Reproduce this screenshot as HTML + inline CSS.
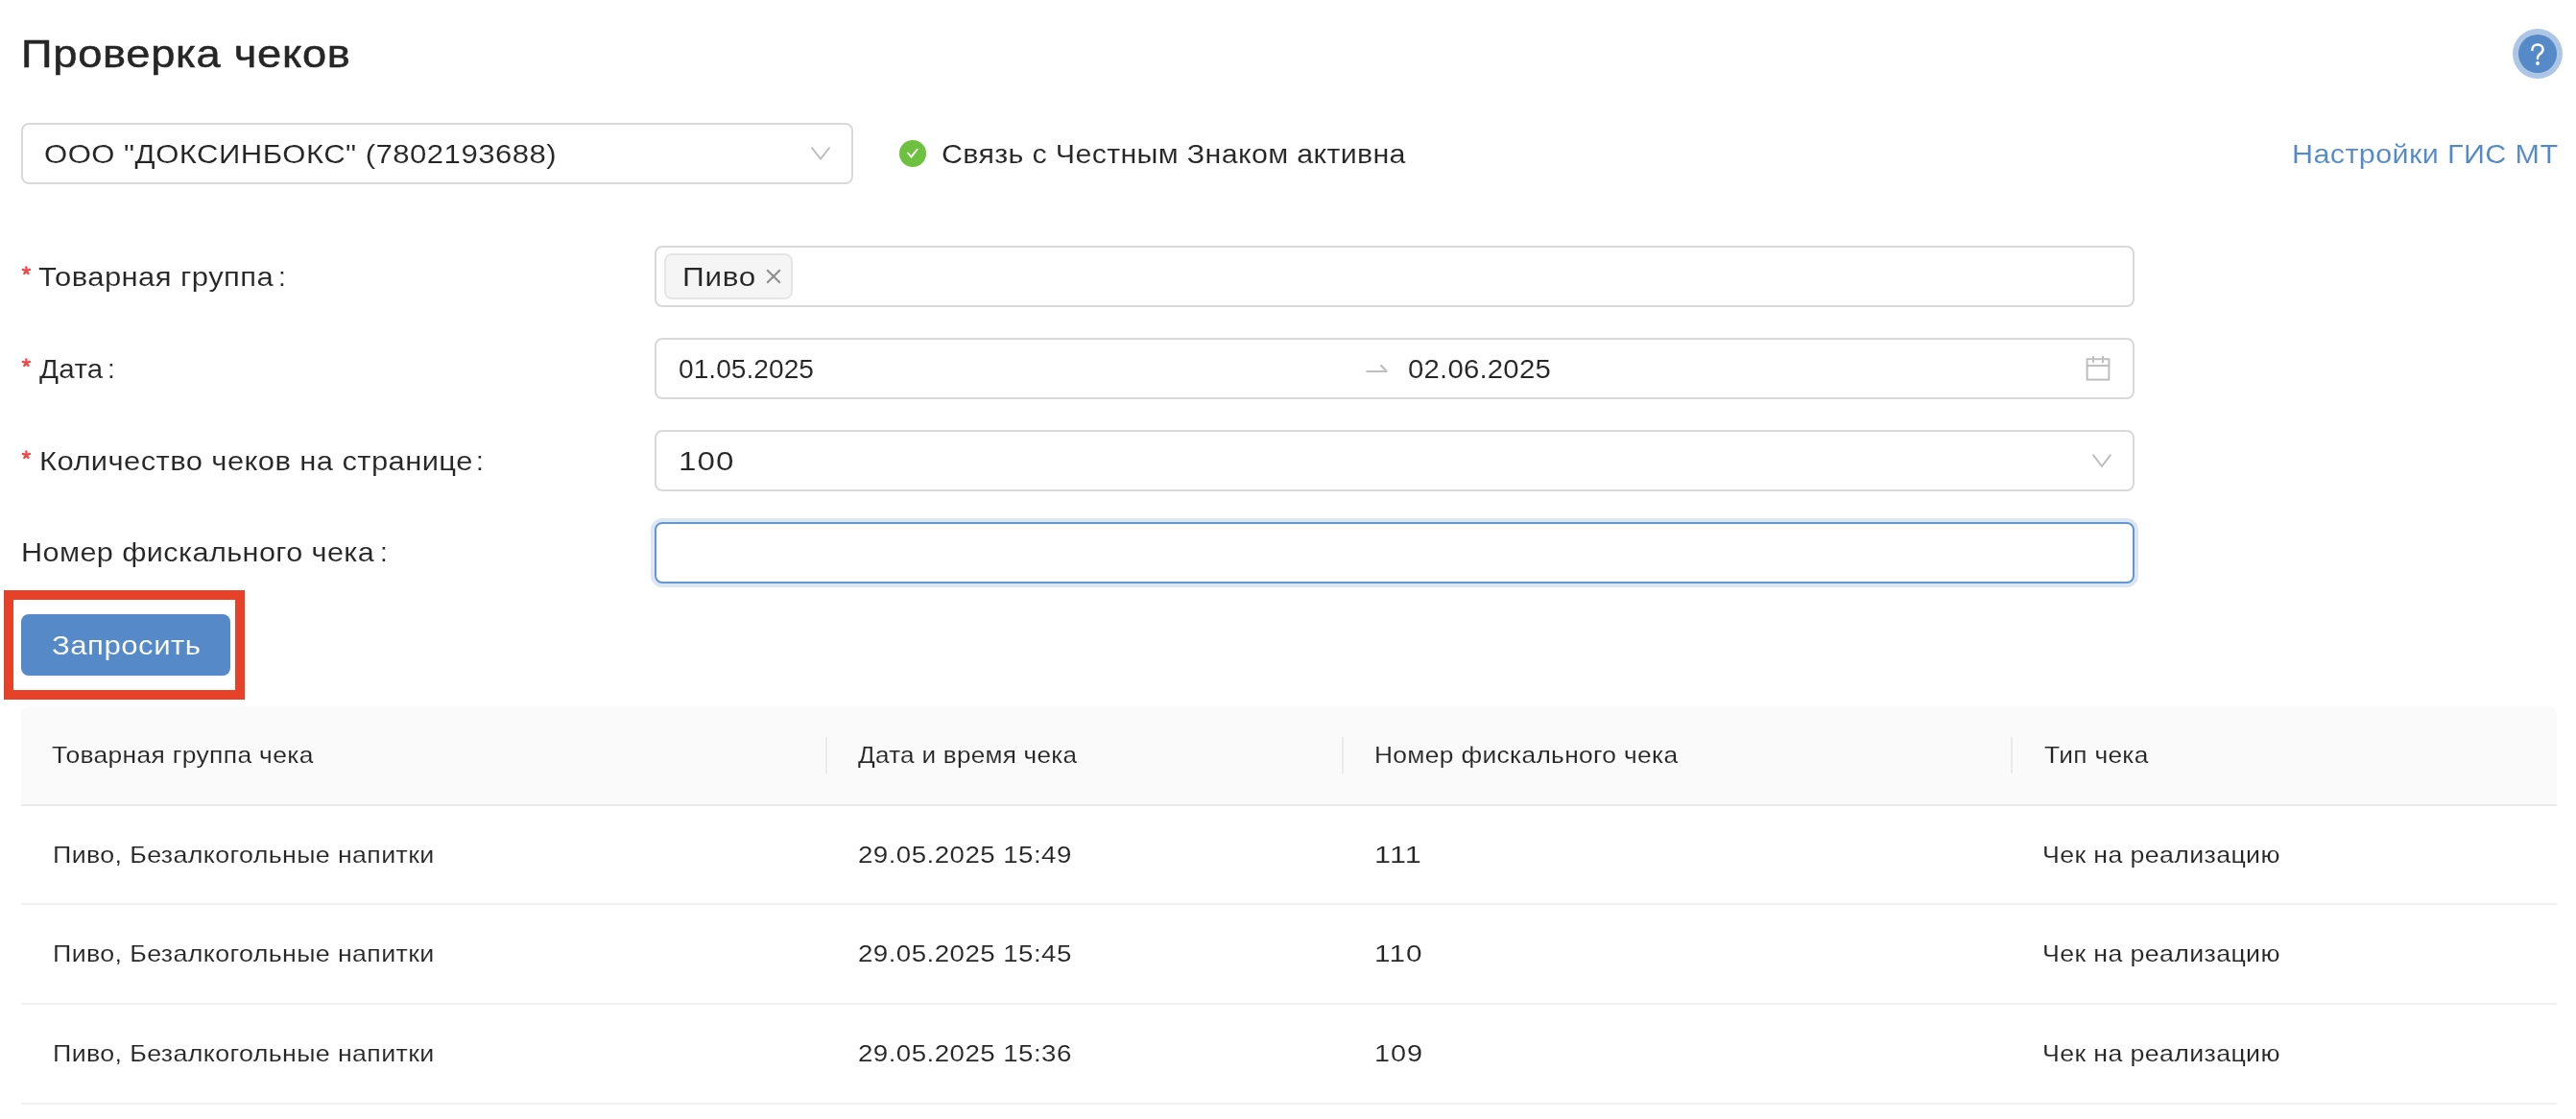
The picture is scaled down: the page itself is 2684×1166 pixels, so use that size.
<!DOCTYPE html>
<html lang="ru">
<head>
<meta charset="utf-8">
<title>Проверка чеков</title>
<style>
html,body{margin:0;padding:0;background:#fff;}
body{width:2684px;height:1166px;position:relative;overflow:hidden;font-family:"Liberation Sans",sans-serif;}
.t{position:absolute;white-space:pre;line-height:1;transform-origin:0 0;will-change:transform;font-family:"Liberation Sans",sans-serif;}
.box{position:absolute;box-sizing:border-box;border:2px solid #d9d9d9;border-radius:8px;background:#fff;}
.ic{position:absolute;overflow:visible;}
.star{position:absolute;}
.hline{position:absolute;left:22px;width:2642px;height:2px;background:#f0f0f0;}
.vdiv{position:absolute;top:768px;width:2px;height:38px;background:#ebebeb;}
</style>
</head>
<body>
<!-- help icon -->
<svg class="ic" style="left:2610px;top:22px" width="68" height="68" viewBox="0 0 68 68">
  <circle cx="34" cy="34" r="26" fill="#adc6e5"/>
  <circle cx="34" cy="34" r="20" fill="#5589c8"/>
  <path d="M28.4 30 C28.4 26.6 31 24.4 34 24.4 C37.2 24.4 39.6 26.6 39.6 29.4 C39.6 32 37.8 33.2 36.2 34.4 C34.8 35.6 34 36.6 34 38.2 L34 39" fill="none" stroke="#fff" stroke-width="2.5" stroke-linecap="round"/>
  <circle cx="34" cy="44" r="1.9" fill="#fff"/>
</svg>

<!-- org select -->
<div class="box" style="left:22px;top:128px;width:867px;height:64px;"></div>
<svg class="ic" style="left:835px;top:140px" width="40" height="40" viewBox="0 0 40 40">
  <polyline points="10.6,13.6 20,25.6 29.4,13.6" fill="none" stroke="#bfbfbf" stroke-width="2"/>
</svg>

<!-- status -->
<svg class="ic" style="left:937px;top:146px" width="28" height="28" viewBox="0 0 28 28">
  <circle cx="14" cy="14" r="14" fill="#6ec040"/>
  <path d="M7.9 13.5 L9.4 12.4 L12.5 15.9 L17.6 9.6 Q18.4 8.9 19.4 8.9 L20.2 8.9 L12.6 18.9 Z" fill="#fff"/>
</svg>

<!-- form: asterisks -->
<svg class="star" style="left:22px;top:277px" width="11" height="11" viewBox="0 0 11 11"><g stroke="#ea4c4c" stroke-width="2.3" stroke-linecap="round"><line x1="5.4" y1="5.2" x2="5.4" y2="1.3"/><line x1="5.4" y1="5.2" x2="1.8" y2="3.9"/><line x1="5.4" y1="5.2" x2="9.0" y2="3.9"/><line x1="5.4" y1="5.2" x2="3.3" y2="8.0"/><line x1="5.4" y1="5.2" x2="7.5" y2="8.0"/></g></svg>
<svg class="star" style="left:22px;top:373px" width="11" height="11" viewBox="0 0 11 11"><g stroke="#ea4c4c" stroke-width="2.3" stroke-linecap="round"><line x1="5.4" y1="5.2" x2="5.4" y2="1.3"/><line x1="5.4" y1="5.2" x2="1.8" y2="3.9"/><line x1="5.4" y1="5.2" x2="9.0" y2="3.9"/><line x1="5.4" y1="5.2" x2="3.3" y2="8.0"/><line x1="5.4" y1="5.2" x2="7.5" y2="8.0"/></g></svg>
<svg class="star" style="left:22px;top:469px" width="11" height="11" viewBox="0 0 11 11"><g stroke="#ea4c4c" stroke-width="2.3" stroke-linecap="round"><line x1="5.4" y1="5.2" x2="5.4" y2="1.3"/><line x1="5.4" y1="5.2" x2="1.8" y2="3.9"/><line x1="5.4" y1="5.2" x2="9.0" y2="3.9"/><line x1="5.4" y1="5.2" x2="3.3" y2="8.0"/><line x1="5.4" y1="5.2" x2="7.5" y2="8.0"/></g></svg>

<!-- inputs -->
<div class="box" style="left:682px;top:256px;width:1542px;height:64px;"></div>
<div class="box" style="left:692px;top:264px;width:134px;height:48px;background:#f5f5f5;border-color:#e6e6e6;"></div>
<svg class="ic" style="left:796px;top:278px" width="20" height="20" viewBox="0 0 20 20">
  <g stroke="#8c8c8c" stroke-width="2"><line x1="3.2" y1="3.2" x2="16.8" y2="16.8"/><line x1="16.8" y1="3.2" x2="3.2" y2="16.8"/></g>
</svg>

<div class="box" style="left:682px;top:352px;width:1542px;height:64px;"></div>
<svg class="ic" style="left:1420px;top:374px" width="30" height="16" viewBox="0 0 30 16">
  <polyline points="3.5,13 25,13 18.4,6.4" fill="none" stroke="#bfbfbf" stroke-width="2.2" stroke-linejoin="bevel"/>
</svg>
<svg class="ic" style="left:2170px;top:368px" width="32" height="32" viewBox="0 0 32 32">
  <g fill="none" stroke="#bfbfbf" stroke-width="2"><rect x="4.6" y="6.2" width="22.8" height="21.4"/><line x1="4.6" y1="13" x2="27.4" y2="13"/><line x1="11" y1="3" x2="11" y2="10"/><line x1="21" y1="3" x2="21" y2="10"/></g>
</svg>

<div class="box" style="left:682px;top:448px;width:1542px;height:64px;"></div>
<svg class="ic" style="left:2170px;top:460px" width="40" height="40" viewBox="0 0 40 40">
  <polyline points="10.6,13.6 20,25.8 29.4,13.6" fill="none" stroke="#bfbfbf" stroke-width="2"/>
</svg>

<div class="box" style="left:682px;top:544px;width:1542px;height:64px;border-color:#6396d2;box-shadow:0 0 0 4px #dde7f3;"></div>

<!-- red highlight + button -->
<div style="position:absolute;left:4px;top:615px;width:251px;height:114px;box-sizing:border-box;border:10px solid #e8412a;"></div>
<div style="position:absolute;left:22px;top:640px;width:218px;height:64px;background:#5589c8;border-radius:8px;box-shadow:0 2px 0 rgba(0,0,0,0.03);"></div>

<!-- table -->
<div style="position:absolute;left:22px;top:736px;width:2642px;height:102px;background:#fafafa;border-radius:8px 8px 0 0;"></div>
<div class="hline" style="top:838px;background:#e9e9e9"></div>
<div class="vdiv" style="left:860px"></div>
<div class="vdiv" style="left:1398px"></div>
<div class="vdiv" style="left:2095px"></div>
<div class="hline" style="top:941px"></div>
<div class="hline" style="top:1045px"></div>
<div class="hline" style="top:1149px"></div>

<div class="t" style="left:22.21px;top:36.00px;font-size:40px;color:#262626;transform:scaleX(1.1308);letter-spacing:0.645px;-webkit-text-stroke:0.5px #262626;">Проверка чеков</div>
<div class="t" style="left:46.09px;top:146.50px;font-size:28px;color:#262626;transform:scaleX(1.1112);letter-spacing:0.417px;-webkit-text-stroke:0.1px #fff;">ООО &quot;ДОКСИНБОКС&quot; (7802193688)</div>
<div class="t" style="left:981.31px;top:146.50px;font-size:28px;color:#262626;transform:scaleX(1.0868);letter-spacing:0.300px;-webkit-text-stroke:0.1px #fff;">Связь с Честным Знаком активна</div>
<div class="t" style="left:2387.62px;top:146.50px;font-size:28px;color:#5289c8;transform:scaleX(1.0911);letter-spacing:0.342px;-webkit-text-stroke:0.1px #fff;">Настройки ГИС МТ</div>
<div class="t" style="left:40.29px;top:274.50px;font-size:28px;color:#262626;transform:scaleX(1.1087);letter-spacing:0.376px;-webkit-text-stroke:0.1px #fff;">Товарная группа</div>
<div class="t" style="left:289.70px;top:274.50px;font-size:28px;color:#262626;-webkit-text-stroke:0.1px #fff;">:</div>
<div class="t" style="left:710.84px;top:274.50px;font-size:28px;color:#262626;transform:scaleX(1.1283);letter-spacing:0.597px;-webkit-text-stroke:0.1px #f5f5f5;">Пиво</div>
<div class="t" style="left:40.90px;top:370.50px;font-size:28px;color:#262626;transform:scaleX(1.0555);letter-spacing:0.272px;-webkit-text-stroke:0.1px #fff;">Дата</div>
<div class="t" style="left:112.20px;top:370.50px;font-size:28px;color:#262626;-webkit-text-stroke:0.1px #fff;">:</div>
<div class="t" style="left:706.50px;top:370.50px;font-size:28px;color:#262626;transform:scaleX(1.0046);letter-spacing:0.018px;-webkit-text-stroke:0.1px #fff;">01.05.2025</div>
<div class="t" style="left:1466.95px;top:370.50px;font-size:28px;color:#262626;transform:scaleX(1.0493);letter-spacing:0.180px;-webkit-text-stroke:0.1px #fff;">02.06.2025</div>
<div class="t" style="left:41.39px;top:466.50px;font-size:28px;color:#262626;transform:scaleX(1.1069);letter-spacing:0.353px;-webkit-text-stroke:0.1px #fff;">Количество чеков на странице</div>
<div class="t" style="left:495.70px;top:466.50px;font-size:28px;color:#262626;-webkit-text-stroke:0.1px #fff;">:</div>
<div class="t" style="left:706.93px;top:466.50px;font-size:28px;color:#262626;transform:scaleX(1.1855);letter-spacing:0.860px;-webkit-text-stroke:0.1px #fff;">100</div>
<div class="t" style="left:21.81px;top:562.10px;font-size:28px;color:#262626;transform:scaleX(1.0957);letter-spacing:0.340px;-webkit-text-stroke:0.1px #fff;">Номер фискального чека</div>
<div class="t" style="left:395.60px;top:562.10px;font-size:28px;color:#262626;-webkit-text-stroke:0.1px #fff;">:</div>
<div class="t" style="left:53.99px;top:659.10px;font-size:28px;color:#ffffff;transform:scaleX(1.1134);letter-spacing:0.427px;-webkit-text-stroke:0.1px #5589c8;">Запросить</div>
<div class="t" style="left:53.60px;top:774.70px;font-size:24px;color:#262626;transform:scaleX(1.1018);letter-spacing:0.294px;-webkit-text-stroke:0.1px #fafafa;">Товарная группа чека</div>
<div class="t" style="left:894.30px;top:774.70px;font-size:24px;color:#262626;transform:scaleX(1.0866);letter-spacing:0.257px;-webkit-text-stroke:0.1px #fafafa;">Дата и время чека</div>
<div class="t" style="left:1432.30px;top:774.70px;font-size:24px;color:#262626;transform:scaleX(1.0980);letter-spacing:0.298px;-webkit-text-stroke:0.1px #fafafa;">Номер фискального чека</div>
<div class="t" style="left:2129.50px;top:774.70px;font-size:24px;color:#262626;transform:scaleX(1.0948);letter-spacing:0.300px;-webkit-text-stroke:0.1px #fafafa;">Тип чека</div>
<div class="t" style="left:54.67px;top:878.50px;font-size:24px;color:#262626;transform:scaleX(1.1166);letter-spacing:0.332px;-webkit-text-stroke:0.1px #fff;">Пиво, Безалкогольные напитки</div>
<div class="t" style="left:894.25px;top:878.50px;font-size:24px;color:#262626;transform:scaleX(1.1522);letter-spacing:0.407px;-webkit-text-stroke:0.1px #fff;">29.05.2025 15:49</div>
<div class="t" style="left:1431.65px;top:878.50px;font-size:24px;color:#262626;transform:scaleX(1.2753);letter-spacing:0.917px;-webkit-text-stroke:0.1px #fff;">111</div>
<div class="t" style="left:2127.57px;top:878.50px;font-size:24px;color:#262626;transform:scaleX(1.1136);letter-spacing:0.341px;-webkit-text-stroke:0.1px #fff;">Чек на реализацию</div>
<div class="t" style="left:54.67px;top:982.00px;font-size:24px;color:#262626;transform:scaleX(1.1166);letter-spacing:0.332px;-webkit-text-stroke:0.1px #fff;">Пиво, Безалкогольные напитки</div>
<div class="t" style="left:894.25px;top:982.00px;font-size:24px;color:#262626;transform:scaleX(1.1522);letter-spacing:0.407px;-webkit-text-stroke:0.1px #fff;">29.05.2025 15:45</div>
<div class="t" style="left:1431.72px;top:982.00px;font-size:24px;color:#262626;transform:scaleX(1.2400);letter-spacing:0.871px;-webkit-text-stroke:0.1px #fff;">110</div>
<div class="t" style="left:2127.57px;top:982.00px;font-size:24px;color:#262626;transform:scaleX(1.1136);letter-spacing:0.341px;-webkit-text-stroke:0.1px #fff;">Чек на реализацию</div>
<div class="t" style="left:54.67px;top:1085.70px;font-size:24px;color:#262626;transform:scaleX(1.1166);letter-spacing:0.332px;-webkit-text-stroke:0.1px #fff;">Пиво, Безалкогольные напитки</div>
<div class="t" style="left:894.25px;top:1085.70px;font-size:24px;color:#262626;transform:scaleX(1.1522);letter-spacing:0.407px;-webkit-text-stroke:0.1px #fff;">29.05.2025 15:36</div>
<div class="t" style="left:1431.79px;top:1085.70px;font-size:24px;color:#262626;transform:scaleX(1.2032);letter-spacing:0.781px;-webkit-text-stroke:0.1px #fff;">109</div>
<div class="t" style="left:2127.57px;top:1085.70px;font-size:24px;color:#262626;transform:scaleX(1.1136);letter-spacing:0.341px;-webkit-text-stroke:0.1px #fff;">Чек на реализацию</div>
</body>
</html>
